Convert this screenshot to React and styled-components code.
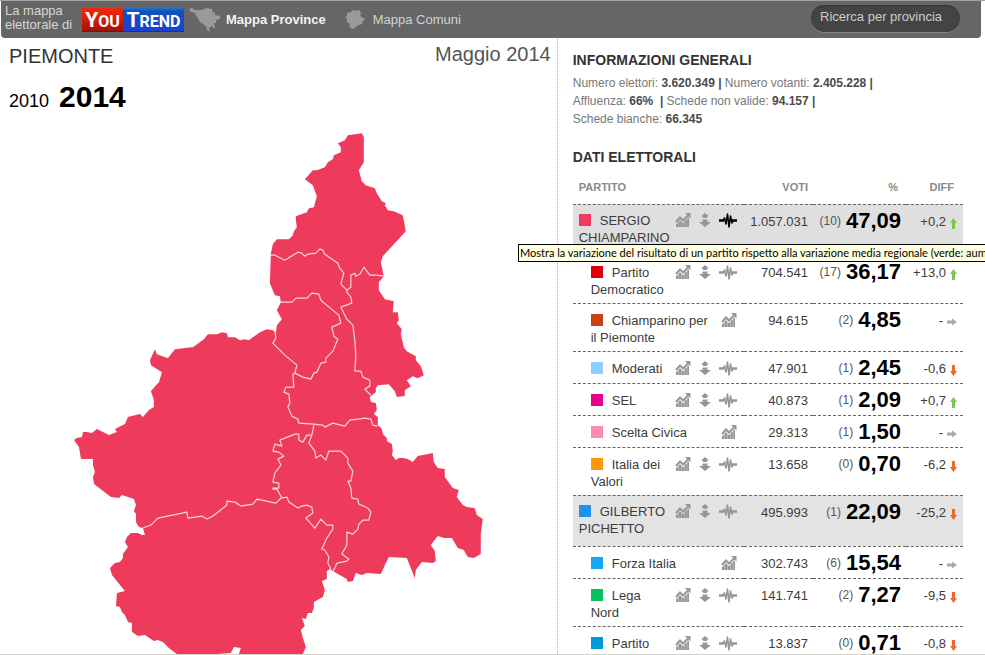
import React from "react";
import styled, { createGlobalStyle } from "styled-components";

const GlobalStyle = createGlobalStyle`
  *, *::before, *::after { box-sizing: border-box; }
  body {
    margin: 0;
    background: #fff;
    font-family: "Liberation Sans", Arial, sans-serif;
    font-size: 13px;
    color: #3c3c3c;
  }
`;

const Shell = styled.div`
  display: flex;
  flex-direction: column;
  height: 100vh;
  overflow: hidden;
  border-top: 1px solid #a3a3a3;
  border-bottom: 1px solid #d3d2c8;
`;

const TopBar = styled.header`
  flex: none;
  display: flex;
  align-items: center;
  height: 37px;
  margin: 0 4px 0 1px;
  padding: 0 21px 0 4px;
  background: #666;
  border-radius: 0 0 4px 4px;
`;

const Tagline = styled.p`
  width: 77px;
  margin: 0 0 4px;
  line-height: 14px;
  color: #d6d6d6;
`;

const Logo = styled.a`
  display: flex;
  width: 102px;
  height: 24px;
  font-family: Roboto, sans-serif;
  font-size: 16px;
  font-weight: 700;
  line-height: 24px;
  color: #fff;
  text-decoration: none;
`;

const LogoHalf = styled.span`
  flex: ${(p) => p.$grow} 0 0;
  text-align: center;
  text-transform: uppercase;
  white-space: nowrap;
  background: ${(p) => p.$fill};
  border-bottom: 1px solid ${(p) => p.$edge};

  &::first-letter { font-size: 21px; }
`;

const MapNav = styled.nav`
  display: flex;
  flex: 1;
  align-items: center;
  gap: 19px;
  padding-left: 4px;
`;

const MapLink = styled.a`
  display: flex;
  align-items: center;
  gap: ${(p) => (p.$current ? 4 : 7)}px;
  color: ${(p) => (p.$current ? "#f2f2f2" : "#d2d2d2")};
  font-weight: ${(p) => (p.$current ? 700 : 400)};
  text-decoration: none;
  white-space: nowrap;

  svg { display: block; fill: #9a9a9a; }
`;

const SearchInput = styled.input`
  width: 149px;
  height: 27px;
  margin-bottom: 2px;
  padding: 0 9px 4px;
  border: 0;
  border-radius: 14px;
  background: #444;
  box-shadow: inset 0 1px 2px #333, 0 1px 0 #848484;
  color: #ccc;
  font: inherit;

  &::placeholder { color: #ccc; opacity: 1; }
`;

const Columns = styled.main`
  flex: 1;
  min-height: 0;
  display: grid;
  grid-template-columns: minmax(0, 13fr) minmax(0, 10fr);
  grid-template-rows: minmax(0, 1fr);
`;

const MapPane = styled.section`
  display: flex;
  flex-direction: column;
  min-height: 0;
`;

const MapHeading = styled.div`
  display: flex;
  justify-content: space-between;
  padding: 4px 6px 0 9px;
  line-height: 24px;
`;

const Region = styled.h1`
  margin: 2px 0 0;
  font-size: 20px;
  font-weight: 400;
  color: #333;
`;

const DateLabel = styled.span`
  font-size: 20px;
  color: #555;
`;

const Years = styled.div`
  display: flex;
  align-items: baseline;
  gap: 10px;
  padding: 12px 9px 0;
`;

const YearLink = styled.a`
  font-size: ${(p) => (p.$current ? 30 : 18)}px;
  font-weight: ${(p) => (p.$current ? 700 : 400)};
  line-height: 34px;
  color: #000;
  text-decoration: none;
`;

const MapDrawing = styled.svg`
  flex: 1;
  display: block;
  width: 100%;
  min-height: 0;
`;

const DataPane = styled.aside`
  min-width: 0;
  margin-top: 1px;
  padding: 11px 22px 0 15px;
  border-left: 1px dotted #aaa;
`;

const SectionTitle = styled.h2`
  margin: 0;
  font-size: 14px;
  line-height: 20px;
  color: #333;
`;

const Facts = styled.p`
  margin: 4px 0 19px;
  font-size: 12px;
  line-height: 18px;
  color: #777;

  b { color: #4a4a4a; }
`;

const Results = styled.table`
  width: 100%;
  margin-top: 10px;
  border-spacing: 0;
  table-layout: fixed;
`;

const Column = styled.col`
  width: ${(p) => (p.$size ? `${p.$size}px` : "auto")};
`;

const HeadCell = styled.th`
  height: 27px;
  padding: 0 ${(p) => p.$inset || 5}px 7px 6px;
  font-size: 11px;
  line-height: 20px;
  text-align: ${(p) => (p.$start ? "left" : "right")};
  color: #8a8a8a;
`;

const Row = styled.tr`
  background: ${(p) => (p.$active ? "#dfdfdf" : p.$group ? "#e3e3e3" : "transparent")};
`;

const Cell = styled.td`
  height: ${(p) => (p.$group ? 51 : 32)}px;
  padding: 8px 5px 5px 0;
  border-top: 1px dashed #666;
  vertical-align: top;
  line-height: 17px;
  text-align: right;
  white-space: nowrap;
`;

const PartyCell = styled(Cell)`
  padding: ${(p) => (p.$group ? "7px 7px 6px 6px" : "8px 7px 5px 18px")};
  text-align: left;
  white-space: normal;
`;

const PartyLine = styled.div`
  display: flex;
  align-items: flex-start;
`;

const PartyName = styled.span`
  flex: 1;
  min-width: 0;
`;

const Swatch = styled.i`
  display: inline-block;
  width: 12px;
  height: 12px;
  margin-right: 9px;
  background: ${(p) => p.$color};
  vertical-align: -1px;
`;

const Tools = styled.span`
  display: flex;
  gap: 8px;
  margin-left: ${(p) => (p.$single ? 10 : 3)}px;
`;

const ToolButton = styled.button`
  position: relative;
  display: block;
  height: 17px;
  padding: 0;
  border: 0;
  background: none;
  color: ${(p) => (p.$active ? "#000" : "#999595")};
  cursor: pointer;

  svg { display: block; }
`;

const Tooltip = styled.span`
  position: absolute;
  top: 32px;
  left: -201px;
  z-index: 2;
  min-width: 500px;
  height: 18px;
  padding: 0 1px;
  border: 1px solid #000;
  background: #ffffe1;
  color: #000;
  font-family: Lato, Tahoma, sans-serif;
  font-size: 11px;
  line-height: 16px;
  text-align: left;
  white-space: nowrap;
`;

const Score = styled.span`
  display: flex;
  justify-content: flex-end;
  align-items: center;
  gap: 5px;
  height: 15px;
`;

const Seats = styled.span`
  padding-top: 2px;
  font-size: 12px;
  color: #555;
`;

const Percent = styled.b`
  font-size: 22px;
  line-height: 17px;
  color: #000;
`;

const Diff = styled.span`
  display: flex;
  justify-content: flex-end;
  align-items: center;
  gap: 4px;
  padding-right: 1px;

  svg { display: block; margin-top: 3px; }
`;

function ChartIcon() {
  return (
    <svg width="16" height="17" viewBox="0 0 16 17" aria-hidden="true">
      <path d="M1 15v-3l4-4 3 3 5-5 1-1v10z" fill="currentColor" opacity=".65" />
      <path d="M1 12h2v3H1zM4 9h2v6H4zM7 11h2v4H7zM10 8h1.500v7H10zM12.500 6H14v9h-1.500z" fill="currentColor" />
      <path d="M1 10l4-4.500 3 3 5-5" fill="none" stroke="currentColor" strokeWidth="2" />
      <path d="M10 1h5.500v5.500z" fill="currentColor" />
    </svg>
  );
}

function UpDownIcon() {
  return (
    <svg width="12" height="17" viewBox="0 0 12 17" aria-hidden="true">
      <path d="M6 1l4 3.500H8V6H4V4.500H2zM3.500 7.500h5v2.500H12L6 15l-6-5h3.500z" fill="currentColor" />
    </svg>
  );
}

function PulseIcon() {
  return (
    <svg width="18" height="17" viewBox="0 0 18 17" fill="none" stroke="currentColor" aria-hidden="true">
      <path d="M0 8.500h5M13 8.500H18" strokeWidth="2.400" />
      <path d="M4 8.500L5.500 6l1.500 6L8.500 2l1.500 13L11.500 4l1.500 7 1-2.500" strokeWidth="1.6" strokeLinejoin="round" />
    </svg>
  );
}

function TrendArrow({ trend }) {
  if (trend === "flat") {
    return (
      <svg width="10" height="8" viewBox="0 0 10 8" role="img" aria-label="stabile">
        <path d="M0 2.500h5V0.500L10 4 5 7.500V5.500H0z" fill="#a9a9a9" />
      </svg>
    );
  }
  return trend === "up" ? (
    <svg width="7" height="11" viewBox="0 0 7 11" role="img" aria-label="in aumento">
      <path d="M3.500 0L7 5H5v6H2V5H0z" fill="#7cc653" />
    </svg>
  ) : (
    <svg width="7" height="11" viewBox="0 0 7 11" role="img" aria-label="in calo">
      <path d="M3.500 11L7 6H5V0H2v6H0z" fill="#ea6a2b" />
    </svg>
  );
}

const REGION =
  "M348 135L362 133 364 137 364 162 359 170 362 181 366 185 375 188 377 193 382 201 386 203 385 205 388 210 394 211 403 215 406 231 383 256 381 262 384 276 379 282 379 290 385 299 394 301 393 312 398 312 399 320 397 323 402 329 401 334 404 347 407 351 416 356 416 360 421 366 424 375 418 378 413 376 407 380 411 386 405 390 405 396 397 397 395 391 389 384 378 385 376 388 376 392 370 397 371 402 376 403 377 410 374 414 378 417 378 425 382 429 383 434 387 438 387 441 392 444 393 451 392 455 396 460 399 458 403 458 408 459 413 462 418 456 433 453 434 462 438 468 445 469 445 477 453 488 459 490 457 497 463 505 467 507 475 508 477 515 483 519 481 534 481 554 474 558 468 557 464 550 458 548 452 538 444 538 438 536 431 545 435 551 436 561 433 563 422 562 416 570 415 578 407 558 389 557 386 563 381 574 367 573 362 575 356 573 353 581 348 582 347 579 338 574 333 571 330 569 327 571 327 579 322 581 325 590 323 597 314 602 314 608 312 613 308 613 306 619 302 618 305 626 301 630 303 638 306 647 303 654 239 654 241 648 234 647 231 653 217 654 177 654 169 648 163 642 158 640 154 641 145 635 138 636 132 632 132 623 128 622 125 615 122 612 120 607 116 606 117 593 125 591 112 575 110 568 115 563 120 562 123 558 123 554 128 547 125 542 127 537 131 533 138 533 142 535 145 535 143 528 139 527 136 522 136 514 134 511 136 505 134 499 122 495 119 498 111 497 94 484 93 477 95 472 93 465 93 459 81 459 79 447 74 440 77 438 82 437 83 432 87 432 92 433 97 429 109 435 117 432 115 429 125 424 128 417 140 414 143 417 149 410 154 407 154 400 151 391 156 385 159 382 162 372 151 365 150 360 155 349 157 354 168 358 175 349 191 347 193 347 204 339 208 334 217 334 222 332 227 333 228 337 235 337 240 340 245 339 249 340 260 332 267 329 273 330 276 333 277 325 282 319 277 310 281 302 280 296 275 295 270 283 271 253 273 244 277 239 289 239 293 235 294 231 297 227 296 220 296 216 307 212 309 208 314 207 317 196 313 185 305 179 313 170 317 170 325 167 328 162 333 159 334 155 341 152 341 147 338 143 345 140Z";

const BORDERS = [
  "M271 255L275 255 285 260 298 252 302 253 305 256 308 254 316 253 320 249 323 250 325 254 338 263 340 268 344 273 341 284 347 290 351 287 351 275 355 273 356 276 360 274 364 267 370 275 377 275 384 276",
  "M347 290L347 292 351 297 352 303 341 307 347 319 353 325 355 340 356 355 355 371 361 371 363 377 370 380 370 386 365 389 371 395",
  "M281 302L292 302 296 298 307 298 312 293 319 294 321 300 339 315 341 323 332 327 334 336 338 339 333 351 326 358 326 362 321 363 317 372 314 373 311 379 303 377 295 373",
  "M275 330L276 338 273 343 278 348 285 355 297 365 295 373 293 374 294 387 286 387 284 392 289 394 290 403 288 407 292 416 298 419 299 423 314 424 323 425 325 427 333 423 345 426 350 420 358 419 365 418 371 419 373 425 378 426",
  "M314 425L312 435 309 443 315 451 316 458 321 455 326 460 329 451 341 451 348 458 348 463 353 471 351 481 348 481 351 488 352 498 358 499 359 504 368 508 371 512 369 520 363 520 359 524 358 529 353 534 347 532 347 545 342 554 349 559 347 561 337 563 335 568 333 571",
  "M312 435L307 435 303 442 299 440 299 434 295 434 280 440 282 446 275 444 273 451 279 452 284 456 278 459 281 465 275 473 273 482 279 483 279 488 273 488 273 489 277 489 282 498",
  "M143 528L151 525 158 518 187 512 188 518 202 516 207 519 213 516 227 505 227 501 235 502 241 506 253 504 257 499 276 503 281 498 287 497 289 502 298 508 302 506 307 505 312 507 313 513 306 518 315 528 321 519 327 525 333 525 333 529 327 538 322 549 325 550 329 557 328 563 331 569",
];

const PARTIES = [
  { name: "SERGIO CHIAMPARINO", color: "#ee3b5e", votes: "1.057.031", seats: 10, pct: "47,09", diff: "+0,2", trend: "up", group: true, active: true },
  { name: "Partito Democratico", color: "#db0007", votes: "704.541", seats: 17, pct: "36,17", diff: "+13,0", trend: "up" },
  { name: "Chiamparino per il Piemonte", color: "#ca4112", votes: "94.615", seats: 2, pct: "4,85", diff: "-", trend: "flat" },
  { name: "Moderati", color: "#8bd1ff", votes: "47.901", seats: 1, pct: "2,45", diff: "-0,6", trend: "down" },
  { name: "SEL", color: "#e6008c", votes: "40.873", seats: 1, pct: "2,09", diff: "+0,7", trend: "up" },
  { name: "Scelta Civica", color: "#ff8aaa", votes: "29.313", seats: 1, pct: "1,50", diff: "-", trend: "flat" },
  { name: "Italia dei Valori", color: "#fc960a", votes: "13.658", seats: 0, pct: "0,70", diff: "-6,2", trend: "down" },
  { name: "GILBERTO PICHETTO", color: "#1e92ec", votes: "495.993", seats: 1, pct: "22,09", diff: "-25,2", trend: "down", group: true },
  { name: "Forza Italia", color: "#13a7f5", votes: "302.743", seats: 6, pct: "15,54", diff: "-", trend: "flat" },
  { name: "Lega Nord", color: "#07c05c", votes: "141.741", seats: 2, pct: "7,27", diff: "-9,5", trend: "down" },
  { name: "Partito", color: "#0099dd", votes: "13.837", seats: 0, pct: "0,71", diff: "-0,8", trend: "down" },
];

function PartyRow({ party }) {
  const { name, color, votes, seats, pct, diff, trend, group, active } = party;
  const single = trend === "flat";
  return (
    <Row $group={group} $active={active}>
      <PartyCell $group={group}>
        <PartyLine>
          <PartyName><Swatch $color={color} />{name}</PartyName>
          <Tools $single={single}>
            <ToolButton type="button" aria-label="Andamento"><ChartIcon /></ToolButton>
            {!single && (
              <>
                <ToolButton type="button" aria-label="Differenza"><UpDownIcon /></ToolButton>
                <ToolButton type="button" aria-label="Variazione" $active={active}>
                  <PulseIcon />
                  {active && (
                    <Tooltip role="tooltip">
                      Mostra la variazione del risultato di un partito rispetto alla variazione media regionale (verde: aum
                    </Tooltip>
                  )}
                </ToolButton>
              </>
            )}
          </Tools>
        </PartyLine>
      </PartyCell>
      <Cell $group={group}>{votes}</Cell>
      <Cell $group={group}><Score><Seats>({seats})</Seats><Percent>{pct}</Percent></Score></Cell>
      <Cell $group={group}><Diff>{diff}<TrendArrow trend={trend} /></Diff></Cell>
    </Row>
  );
}

export default function App() {
  return (
    <>
      <GlobalStyle />
      <Shell>
        <TopBar>
          <Tagline>La mappa elettorale di</Tagline>
          <Logo href="#youtrend" aria-label="YouTrend">
            <LogoHalf $grow={41} $fill="linear-gradient(#f02a08, #d81e06 45%, #a01004)" $edge="#8c0a02">You</LogoHalf>
            <LogoHalf $grow={61} $fill="linear-gradient(#1478d8, #1450b8 15%, #1c40d4)" $edge="#1230a0">Trend</LogoHalf>
          </Logo>
          <MapNav>
            <MapLink href="#province" $current>
              <svg width="34" height="26" viewBox="0 0 34 26" aria-hidden="true">
                <path d="M1 2L3 5 7 6 9 10 12 15 18 19 19 23 22 25 21 21 24 19 26 22 27 20 26 16 28 16 28 13 32 12 32 9 27 8 27 5 25 6 24 2 18 1 17 2 13 3 7 3 4 1z" />
              </svg>
              Mappa Province
            </MapLink>
            <MapLink href="#comuni">
              <svg width="21" height="21" viewBox="0 0 21 21" aria-hidden="true">
                <path d="M2 4L6 3 8 1 11 2 14 1 16 4 15 7 20 10 18 12 17 15 14 16 12 17 8 20 4 18 5 15 2 13 2 10 0 8 2 7z" />
              </svg>
              Mappa Comuni
            </MapLink>
          </MapNav>
          <SearchInput type="text" placeholder="Ricerca per provincia" aria-label="Ricerca per provincia" />
        </TopBar>
        <Columns>
          <MapPane>
            <MapHeading>
              <Region>PIEMONTE</Region>
              <DateLabel>Maggio 2014</DateLabel>
            </MapHeading>
            <Years>
              <YearLink href="#2010">2010</YearLink>
              <YearLink href="#2014" $current>2014</YearLink>
            </Years>
            <MapDrawing viewBox="0 125 557 529" preserveAspectRatio="xMinYMax meet" role="img" aria-label="Mappa delle province del Piemonte">
              <path d={REGION} fill="#ee3b5c" />
              {BORDERS.map((d) => (
                <path key={d} d={d} fill="none" stroke="#fbd3da" strokeWidth="1.2" strokeLinejoin="round" />
              ))}
            </MapDrawing>
          </MapPane>
          <DataPane>
            <SectionTitle>INFORMAZIONI GENERALI</SectionTitle>
            <Facts>
              Numero elettori: <b>3.620.349 |</b> Numero votanti: <b>2.405.228 |</b><br />
              Affluenza: <b>66% &nbsp;|</b> Schede non valide: <b>94.157 |</b><br />
              Schede bianche: <b>66.345</b>
            </Facts>
            <SectionTitle>DATI ELETTORALI</SectionTitle>
            <Results>
              <colgroup>
                <Column /><Column $size={69} /><Column $size={93} /><Column $size={57} />
              </colgroup>
              <thead>
                <tr>
                  <HeadCell scope="col" $start>PARTITO</HeadCell>
                  <HeadCell scope="col">VOTI</HeadCell>
                  <HeadCell scope="col" $inset={8}>%</HeadCell>
                  <HeadCell scope="col" $inset={9}>DIFF</HeadCell>
                </tr>
              </thead>
              <tbody>
                {PARTIES.map((party) => <PartyRow key={party.name} party={party} />)}
              </tbody>
            </Results>
          </DataPane>
        </Columns>
      </Shell>
    </>
  );
}
